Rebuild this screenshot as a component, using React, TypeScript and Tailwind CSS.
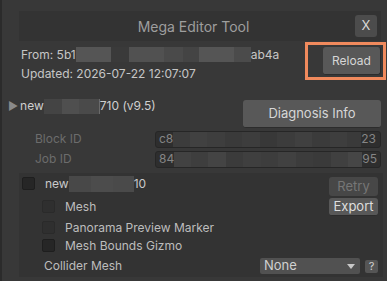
import React from "react";

type Cell = [number, string];

function Mosaic({ cells, h }: { cells: Cell[]; h: number }) {
  return (
    <span className="inline-flex align-middle shrink-0">
      {cells.map(([w, c], i) => (
        <span key={i} className="inline-block" style={{ width: w, height: h, background: c }} />
      ))}
    </span>
  );
}

function Check({ dark }: { dark?: boolean }) {
  return (
    <span
      className={
        dark
          ? "inline-block w-[13px] h-[13px] rounded-[2px] bg-[#262626] border border-[#1e1e1e] shrink-0"
          : "inline-block w-[13px] h-[13px] rounded-[2px] bg-[#2f2f2f] border border-[#2a2a2a] shrink-0"
      }
    />
  );
}

const fieldCells1: Cell[] = [
  [17, "#3c3c3c"], [17, "#414141"], [18, "#3e3e3e"], [17, "#3a3a3a"], [18, "#3d3d3d"],
  [17, "#383838"], [18, "#3c3c3c"], [17, "#404040"], [18, "#3b3b3b"], [17, "#3e3e3e"],
  [14, "#3a3a3a"],
];
const fieldCells2: Cell[] = [
  [17, "#424242"], [17, "#3e3e3e"], [18, "#444444"], [17, "#3b3b3b"], [18, "#3f3f3f"],
  [17, "#3d3d3d"], [18, "#414141"], [17, "#3c3c3c"], [18, "#3a3a3a"], [17, "#404040"],
  [14, "#464646"],
];

export default function App() {
  return (
    <div className="w-[387px] h-[281px] bg-[#383838] border-l-[2px] border-[#2b2b2b] flex flex-col overflow-hidden font-['Inter','Noto_Sans',sans-serif] text-[12px] text-[#c6c6c6]">
      {/* Title bar */}
      <div className="ml-[17px] mr-[6px] mt-[11px] h-[30px] bg-[#333333] flex items-center">
        <span className="flex-1 text-center pl-[13px] text-[14px] text-[#9e9e9e]">Mega Editor Tool</span>
        <span className="w-[22px] h-[22px] mr-[4px] rounded-[3px] bg-[#4c4c4c] flex items-center justify-center text-[13px] text-[#d8d8d8]">
          X
        </span>
      </div>

      {/* Header */}
      <div className="flex items-start">
        <div className="pl-[19px] pt-[4px] leading-[19px] whitespace-nowrap">
          <div className="flex items-center">
            <span>From: 5b1</span>
            <Mosaic
              h={15}
              cells={[
                [35, "#555555"], [18, "#3a3a3a"], [35, "#515151"], [19, "#4a4a4a"],
                [16, "#444444"], [35, "#555555"], [17, "#4b4b4b"],
              ]}
            />
            <span>ab4a</span>
          </div>
          <div>Updated: 2026-07-22 12:07:07</div>
        </div>
        <div className="ml-auto mr-[1px] mt-[1px] w-[81px] h-[38px] border-[3px] border-[#f08a5d] flex items-center justify-end pr-[2px]">
          <span className="w-[58px] h-[28px] rounded-[3px] bg-[#585858] border-b border-r border-[#2c2c2c] flex items-center justify-center text-[#d6d6d6]">
            Reload
          </span>
        </div>
      </div>

      {/* Foldout row */}
      <div className="flex items-start">
        <div className="ml-[6px] mt-[15px] h-[16px] flex items-center whitespace-nowrap text-[#cfcfcf]">
          <span className="text-[11px] text-[#8a8a8a] mr-[2px] leading-none">▶</span>
          <span>new</span>
          <Mosaic h={15} cells={[[18, "#444444"], [17, "#4f4f4f"], [20, "#4a4a4a"], [1, "#6a6a6a"]]} />
          <span>710 (v9.5)</span>
        </div>
        <div className="ml-auto mr-[6px] mt-[17px] w-[138px] h-[28px] rounded-[3px] bg-[#585858] border-b border-[#2c2c2c] flex items-center justify-center text-[#d6d6d6] text-[13px]">
          Diagnosis Info
        </div>
      </div>

      {/* ID fields */}
      <div className="mt-[2px] flex flex-col gap-[2px] mr-[6px]">
        <div className="flex items-center">
          <span className="pl-[33px] w-[153px] shrink-0 text-[#6c6c6c]">Block ID</span>
          <div className="flex-1 h-[17px] rounded-[3px] bg-[#2e2e2e] border border-[#262626] flex items-center overflow-hidden whitespace-nowrap text-[#858585]">
            <span className="pl-[3px]">c8</span>
            <Mosaic h={15} cells={fieldCells1} />
            <span>23</span>
          </div>
        </div>
        <div className="flex items-center">
          <span className="pl-[33px] w-[153px] shrink-0 text-[#6c6c6c]">Job ID</span>
          <div className="flex-1 h-[17px] rounded-[3px] bg-[#2e2e2e] border border-[#262626] flex items-center overflow-hidden whitespace-nowrap text-[#858585]">
            <span className="pl-[3px]">84</span>
            <Mosaic h={15} cells={fieldCells2} />
            <span>95</span>
          </div>
        </div>
      </div>

      {/* Sub panel */}
      <div className="ml-[17px] mr-[4px] mt-[5px] h-[104px] bg-[#333333] flex flex-col pt-[4px]">
        <div className="flex items-start">
          <div className="flex flex-col flex-1">
            <div className="h-[13px] pl-[3px] flex items-center gap-[10px] whitespace-nowrap">
              <Check dark />
              <span className="flex items-center text-[#cacaca] mt-[1px]">
                <span>new</span>
                <Mosaic h={16} cells={[[22, "#484848"], [22, "#4c4c4c"], [21, "#4a4a4a"]]} />
                <span>10</span>
              </span>
            </div>
            <div className="mt-[10px] h-[13px] pl-[23px] flex items-center gap-[10px]">
              <Check />
              <span className="text-[#bdbdbd] mt-[1px]">Mesh</span>
            </div>
            <div className="mt-[8px] h-[13px] pl-[23px] flex items-center gap-[10px] whitespace-nowrap">
              <Check />
              <span className="text-[#bdbdbd] mt-[1px]">Panorama Preview Marker</span>
            </div>
            <div className="mt-[5px] h-[13px] pl-[23px] flex items-center gap-[10px]">
              <Check dark />
              <span className="text-[#bdbdbd] mt-[1px]">Mesh Bounds Gizmo</span>
            </div>
          </div>
          <div className="mr-[5px] flex flex-col gap-[2px]">
            <span className="w-[49px] h-[19px] rounded-[3px] bg-[#474747] flex items-center justify-center text-[#767676] text-[13px]">
              Retry
            </span>
            <span className="w-[49px] h-[18px] rounded-[3px] bg-[#585858] border-b border-[#2c2c2c] flex items-center justify-center text-[#dedede] text-[13px]">
              Export
            </span>
          </div>
        </div>
        <div className="mt-[6px] h-[16px] flex items-center">
          <span className="pl-[25px] text-[#bdbdbd]">Collider Mesh</span>
          <span className="ml-auto w-[100px] h-[16px] rounded-[2px] bg-[#515151] flex items-center pl-[4px] pr-[5px] text-[#d0d0d0] text-[13px]">
            <span className="flex-1">None</span>
            <svg width="8" height="5" viewBox="0 0 8 5">
              <path d="M0 0 L8 0 L4 5 Z" fill="#c8c8c8" />
            </svg>
          </span>
          <span className="ml-[5px] mr-[5px] w-[13px] h-[13px] rounded-[2px] bg-[#555555] flex items-center justify-center text-[11px] text-[#d0d0d0] leading-none">
            ?
          </span>
        </div>
      </div>
    </div>
  );
}
